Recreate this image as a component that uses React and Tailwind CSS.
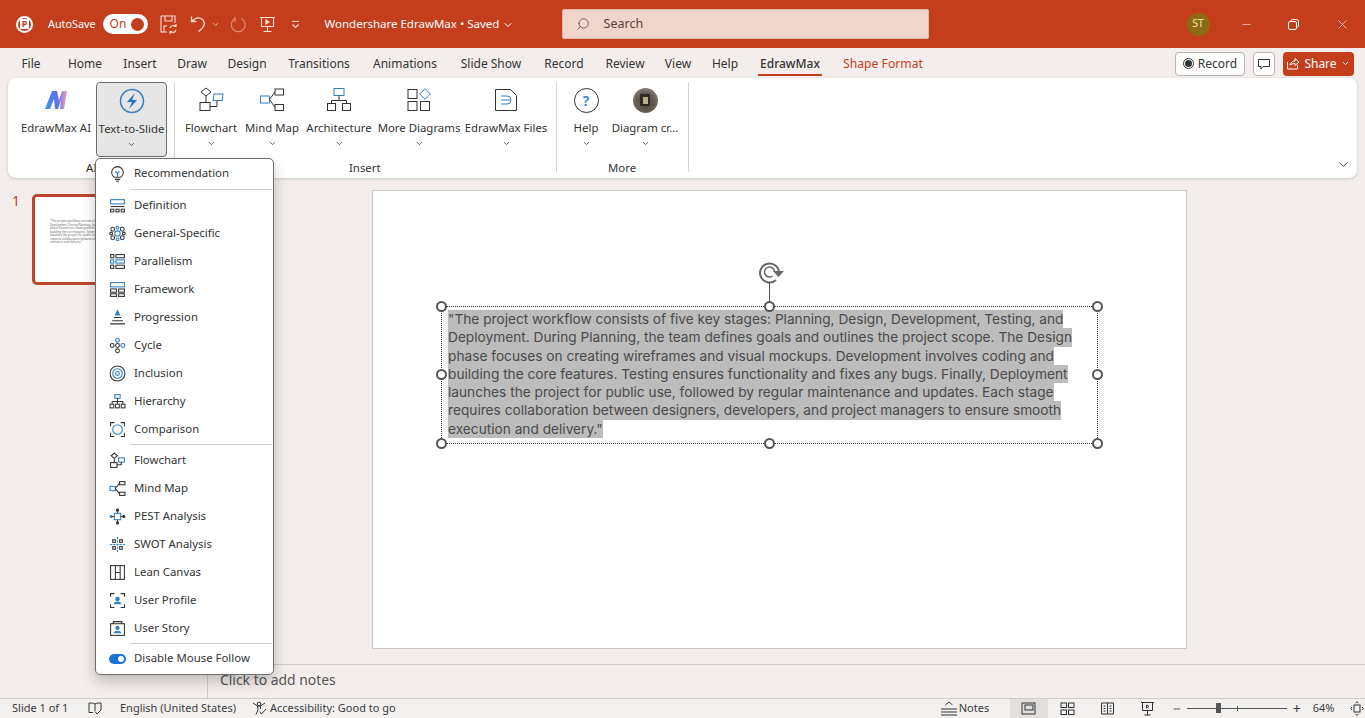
import { ChevronDown, Search, Minus, X } from "lucide-react";

const tabs = [
  ["File", "w-[46px]"], ["Home", "w-[62px]"], ["Insert", "w-[48px]"], ["Draw", "w-[56px]"], ["Design", "w-[54px]"],
  ["Transitions", "w-[90px]"], ["Animations", "w-[82px]"], ["Slide Show", "w-[90px]"], ["Record", "w-[56px]"],
  ["Review", "w-[66px]"], ["View", "w-[40px]"], ["Help", "w-[54px]"],
];

const slideLines = [
  "\"The project workflow consists of five key stages: Planning, Design, Development, Testing, and",
  "Deployment. During Planning, the team defines goals and outlines the project scope. The Design",
  "phase focuses on creating wireframes and visual mockups. Development involves coding and",
  "building the core features. Testing ensures functionality and fixes any bugs. Finally, Deployment",
  "launches the project for public use, followed by regular maintenance and updates. Each stage",
  "requires collaboration between designers, developers, and project managers to ensure smooth",
  "execution and delivery.\"",
];

const B = "#2f7fc1";
const K = "#333";

function Ico({ children, size = 18, box = 18, className = "" }) {
  return (
    <svg width={size} height={size} viewBox={`0 0 ${box} ${box}`} fill="none" stroke={K} strokeWidth="1" className={className}>
      {children}
    </svg>
  );
}

const menuIcons = {
  Recommendation: <><path d="M5 11.500C3.500 10.500 2.500 9 2.500 7a5.500 5.500 0 0 1 11 0c0 2-1 3.500-2.500 4.500z" /><path d="M5.500 13.500h5M6.500 15.300h3" /><path d="M6 6l2 2 2-2M8 8v3" stroke={B} /></>,
  Definition: <><rect x="1.500" y="2.500" width="13" height="4" stroke={B} /><path d="M1.500 9h13" /><rect x="1.500" y="11.500" width="3" height="2.500" /><rect x="6.500" y="11.500" width="3" height="2.500" /><rect x="11.500" y="11.500" width="3" height="2.500" /></>,
  "General-Specific": <><circle cx="8" cy="8" r="2.500" stroke={B} /><circle cx="3.500" cy="4" r="1.800" /><circle cx="12.500" cy="4" r="1.800" /><circle cx="3.500" cy="12" r="1.800" /><circle cx="12.500" cy="12" r="1.800" /><circle cx="8" cy="2.500" r="1.300" stroke={B} /><circle cx="8" cy="13.500" r="1.300" stroke={B} /><circle cx="2" cy="8" r="1.300" /><circle cx="14" cy="8" r="1.300" /></>,
  Parallelism: <><rect x="1.500" y="1.500" width="3" height="3" /><rect x="6.500" y="1.500" width="8" height="3" /><rect x="1.500" y="6.500" width="3" height="3" stroke={B} /><rect x="6.500" y="6.500" width="8" height="3" stroke={B} /><rect x="1.500" y="11.500" width="3" height="3" /><rect x="6.500" y="11.500" width="8" height="3" /></>,
  Framework: <><rect x="1.500" y="1.500" width="13" height="4" stroke={B} /><rect x="1.500" y="7.500" width="5.500" height="3" /><rect x="9" y="7.500" width="5.500" height="3" /><rect x="1.500" y="12" width="5.500" height="2.500" /><rect x="9" y="12" width="5.500" height="2.500" /></>,
  Progression: <><path d="M8 1.500l2 4H6z" fill={B} stroke={B} /><path d="M4.500 8h7M3 11h10M1 14h14" /></>,
  Cycle: <><circle cx="8" cy="3" r="1.800" stroke={B} /><circle cx="8" cy="13" r="1.800" /><circle cx="3" cy="8" r="1.800" /><circle cx="13" cy="8" r="1.800" stroke={B} /><circle cx="8" cy="8" r="1.800" /></>,
  Inclusion: <><circle cx="8" cy="8" r="7" /><circle cx="8" cy="8" r="4.500" stroke={B} /><circle cx="8" cy="8" r="1.800" stroke={B} /></>,
  Hierarchy: <><rect x="5.500" y="1.500" width="5" height="3.500" stroke={B} /><path d="M8 5v3M3 10V8h10v2M8 8v2" /><rect x="1" y="10.500" width="3.500" height="3.500" /><rect x="6.200" y="10.500" width="3.500" height="3.500" /><rect x="11.500" y="10.500" width="3.500" height="3.500" /></>,
  Comparison: <><path d="M1.500 5V1.500H5M11 1.500h3.500V5M14.500 11v3.500H11M5 14.500H1.500V11" /><circle cx="8" cy="8" r="4.500" stroke={B} /></>,
  Flowchart: <><path d="M5 1l3 2.500L5 6 2 3.500z" /><rect x="1.500" y="10" width="6" height="4.500" /><rect x="9" y="5.500" width="5.500" height="4" stroke={B} /><path d="M5 6v4M7.500 12h4V9.500" /></>,
  "Mind Map": <><rect x="1" y="6" width="5" height="4" stroke={B} /><rect x="10" y="1.500" width="5" height="3" /><rect x="10" y="11.500" width="5" height="3" /><path d="M6 8l4-5M6 8l4 5" /></>,
  "PEST Analysis": <><rect x="5" y="5" width="6" height="6" stroke={B} /><circle cx="8" cy="2" r="1" fill={K} /><circle cx="8" cy="14" r="1" fill={K} /><circle cx="2" cy="8" r="1" fill={B} stroke={B} /><circle cx="14" cy="8" r="1" fill={K} /><path d="M8 3v2M8 11v2M3 8h2M11 8h2" /></>,
  "SWOT Analysis": <><path d="M8 1v14M1 8h14" stroke={B} strokeDasharray="2 1" /><rect x="3.500" y="3.500" width="2.500" height="2.500" /><rect x="10" y="3.500" width="2.500" height="2.500" /><rect x="3.500" y="10" width="2.500" height="2.500" /><rect x="10" y="10" width="2.500" height="2.500" /></>,
  "Lean Canvas": <><rect x="1.500" y="1.500" width="13" height="13" /><path d="M6 1.500v13M10.500 1.500v13M6 8h4.500" stroke={K} /></>,
  "User Profile": <><path d="M1.500 4.500v-3H5M11 1.500h3.500v3M14.500 11.500v3H11M5 14.500H1.500v-3" /><circle cx="8" cy="6.500" r="1.600" fill={B} stroke={B} /><path d="M5 11c.5-2 5.500-2 6 0z" fill={B} stroke={B} /></>,
  "User Story": <><rect x="1.500" y="3.500" width="13" height="11" /><path d="M4 3.500V1.500h8v2" /><circle cx="8" cy="7.500" r="1.500" fill={B} stroke={B} /><path d="M5 12c.5-2 5.500-2 6 0z" fill={B} stroke={B} /></>,
};

function MenuItem({ label }) {
  return (
    <div className="flex h-[28px] items-center">
      <span className="flex w-[38px] justify-center pl-[4px]">
        <Ico size={17} box={16}>{menuIcons[label]}</Ico>
      </span>
      <span className="pb-[1px]">{label}</span>
    </div>
  );
}

function RibbonBtn({ label, width, children, active }) {
  return (
    <div className={`flex h-[75px] shrink-0 flex-col items-center rounded-[4px] pt-[3px] ${width} ${active ? "border border-[#6e6e6e] bg-[#e6e6e6]" : ""}`}>
      <div className="flex h-[30px] items-center justify-center">{children}</div>
      <div className="mt-[5px] whitespace-nowrap leading-[16px]">{label}</div>
      {label !== "EdrawMax AI" && <ChevronDown size={9} strokeWidth={2} className="mt-[3px]" />}
    </div>
  );
}

function Handle({ pos }) {
  return <span className={`absolute h-[11px] w-[11px] rounded-full border-2 border-[#555] bg-white ${pos}`} />;
}

export default function App() {
  return (
    <div className="relative flex h-[718px] w-[1365px] flex-col overflow-hidden bg-[#f3eeec] font-['Noto_Sans','Open_Sans',sans-serif] text-[11.4px] text-[#333]">
      {/* title bar */}
      <div className="flex h-[48px] shrink-0 items-center bg-[#c43e1c] text-white">
        <div className="ml-[16px] flex h-[17px] w-[17px] items-center justify-center rounded-full border-[2px] border-white">
          <span className="rounded-[1px] bg-white px-[1.5px] text-[9px] font-bold leading-[10px] text-[#c43e1c]">P</span>
        </div>
        <span className="ml-[15px] text-[10.8px]">AutoSave</span>
        <div className="ml-[7px] flex h-[20px] w-[45px] items-center justify-between rounded-full bg-white pl-[7px] pr-[4px]">
          <span className="text-[12px] leading-none text-[#c43e1c]">On</span>
          <span className="h-[13px] w-[13px] rounded-full bg-[#c43e1c]" />
        </div>
        <svg width="18" height="20" viewBox="0 0 18 20" fill="none" stroke="#f6ddd5" strokeWidth="1.100" className="ml-[12px]">
          <path d="M1 2h14v7M1 2v16h6M5 2v5h7V2M4 18v-6h3" />
          <path d="M10 14a3.500 3.500 0 0 1 6-1.500M16 16a3.500 3.500 0 0 1-6 1.500M16 10v2.500h-2.500M10 20v-2.500h2.500" />
        </svg>
        <svg width="17" height="18" viewBox="0 0 17 18" fill="none" stroke="#f6ddd5" strokeWidth="1.300" className="ml-[12px]">
          <path d="M1.500 1.500v5h5M1.500 6.500C5 3 9 1.500 12.500 4.500c3.500 3.500 2 7.500-4 12" />
        </svg>
        <ChevronDown size={9} strokeWidth={2} className="ml-[4px] text-[#f6ddd5]" />
        <svg width="17" height="17" viewBox="0 0 17 17" fill="none" stroke="#de8a70" strokeWidth="1.200" className="ml-[10px]">
          <path d="M11.500 2.500A7 7 0 1 1 5 2.500M5 1v5" />
        </svg>
        <svg width="17" height="17" viewBox="0 0 17 17" fill="none" stroke="#f6ddd5" strokeWidth="1.100" className="ml-[12px]">
          <path d="M1 1.500h15M2.500 1.500v9h12v-9M8.500 10.500v5M4.500 15.500h8" />
          <path d="M7 4l3 2-3 2z" fill="#f6ddd5" />
        </svg>
        <svg width="9" height="9" viewBox="0 0 9 9" fill="none" stroke="#f6ddd5" strokeWidth="1.100" className="ml-[15px]">
          <path d="M1 1.500h7M1.500 4.500L4.500 7.500l3-3" />
        </svg>
        <span className="ml-[25px] w-[237px] whitespace-nowrap text-[11.5px]">
          Wondershare EdrawMax • Saved <ChevronDown size={12} className="inline" />
        </span>
        <div className="flex h-[30px] w-[367px] items-center rounded-[2px] border border-[#e7b7a8] bg-[#f0d5cc] pl-[13px] text-[#5c4037]">
          <Search size={14} strokeWidth={1.300} className="-scale-x-100" />
          <span className="ml-[14px] text-[12.5px]">Search</span>
        </div>
        <div className="ml-[258px] flex h-[23px] w-[23px] items-center justify-center rounded-full bg-[#8f6a12] text-[10.5px] text-[#f3e6b8]">ST</div>
        <Minus size={13} strokeWidth={1} className="ml-[30px]" />
        <svg width="11" height="11" viewBox="0 0 11 11" fill="none" stroke="white" strokeWidth="1" className="ml-[35px]">
          <path d="M3 2.500V2a1.500 1.500 0 0 1 1.500-1.500h4A2 2 0 0 1 10.500 2.500v4A1.500 1.500 0 0 1 9 8h-.5" />
          <rect x="0.500" y="2.500" width="8" height="8" rx="1.500" />
        </svg>
        <X size={15} strokeWidth={1} className="ml-[36px]" />
      </div>

      {/* tabs */}
      <div className="flex h-[30px] shrink-0 items-center bg-[#f3eeec] pl-[8px] pt-[1px] text-[12px] leading-[16px]">
        {tabs.map(([t, w]) => (
          <span key={t} className={`text-center ${w}`}>{t}</span>
        ))}
        <span className="relative ml-[6px] w-[64px] text-center font-medium">
          EdrawMax
          <span className="absolute -bottom-[4px] left-0 h-[2px] w-full bg-[#c43e1c]" />
        </span>
        <span className="ml-[21px] text-[12.2px] leading-[16px] text-[#c43e1c]">Shape Format</span>
        <div className="ml-auto mr-[11px] flex items-center">
          <div className="flex h-[24px] w-[70px] items-center justify-center rounded-[4px] border border-[#b5b5b5] bg-white">
            <span className="mr-[4px] flex h-[11px] w-[11px] items-center justify-center rounded-full border border-[#333]">
              <span className="h-[7px] w-[7px] rounded-full bg-[#333]" />
            </span>
            Record
          </div>
          <div className="ml-[8px] flex h-[24px] w-[22px] items-center justify-center rounded-[4px] border border-[#b5b5b5] bg-white">
            <svg width="12" height="12" viewBox="0 0 12 12" fill="none" stroke="#333" strokeWidth="1">
              <path d="M.5 1.500h11v7H5L3 11V8.500H.5z" />
            </svg>
          </div>
          <div className="ml-[8px] flex h-[24px] w-[71px] items-center justify-center gap-[4px] rounded-[4px] bg-[#c43e1c] text-white">
            <svg width="13" height="13" viewBox="0 0 13 13" fill="none" stroke="white" strokeWidth="1">
              <path d="M.5 5v7h10V8M3 8c1-3 3-4 5-4V1.500L12 5 8 8.500V6.500C6 6.500 4.500 7 3 8z" />
            </svg>
            Share
            <ChevronDown size={9} strokeWidth={2.500} />
          </div>
        </div>
      </div>

      {/* ribbon */}
      <div className="relative mx-[8px] flex h-[100px] shrink-0 rounded-[8px] bg-white pl-[12px] pt-[4px] shadow-[0_1px_3px_rgba(0,0,0,0.18)]">
        <RibbonBtn label="EdrawMax AI" width="w-[72px]">
          <svg width="22" height="22" viewBox="0 0 22 22">
            <defs>
              <linearGradient id="ai" x1="0" y1="0" x2="1" y2="0">
                <stop offset="0" stopColor="#3a9be8" />
                <stop offset="0.55" stopColor="#5f6fe8" />
                <stop offset="1" stopColor="#f0a0c8" />
              </linearGradient>
            </defs>
            <path d="M0 20L7 2h5l2 9 3-9h5l-3 18h-4l1-9-3 9h-3L9 10l-4 10z" fill="url(#ai)" />
          </svg>
        </RibbonBtn>
        <RibbonBtn label="Text-to-Slide" width="ml-[4px] w-[71px]" active>
          <svg width="26" height="26" viewBox="0 0 26 26">
            <circle cx="13" cy="13" r="11.500" fill="none" stroke="#3a7fc0" strokeWidth="1.500" />
            <path d="M16 5l-8 9h5l-3 7 8-9h-5z" fill="#1f74c4" />
          </svg>
        </RibbonBtn>
        <span className="ml-[7px] mr-[6px] h-[90px] w-px bg-[#d6d6d6]" />
        <RibbonBtn label="Flowchart" width="w-[60px]">
          <Ico size={26} box={26}>
            <path d="M8 1l5 4-5 4-5-4z" /><rect x="2" y="15.500" width="10" height="8" /><rect x="15" y="7" width="9" height="6.500" stroke={B} transform="skewX(-8) translate(2 0)" /><path d="M8 9v6.500M12 19.500h7v-6" />
          </Ico>
        </RibbonBtn>
        <RibbonBtn label="Mind Map" width="w-[62px]">
          <Ico size={26} box={26}>
            <rect x="1.500" y="9" width="9" height="7" stroke={B} /><rect x="16" y="2" width="8.500" height="6" /><rect x="16" y="17.500" width="8.500" height="6" /><path d="M10.500 12.500L16 5M10.500 12.500L16 20.500" />
          </Ico>
        </RibbonBtn>
        <RibbonBtn label="Architecture" width="w-[72px]">
          <Ico size={26} box={26}>
            <rect x="8" y="1.500" width="10" height="7" stroke={B} /><path d="M13 8.500v5M5.500 16.500v-3h15v3" /><rect x="1.500" y="16.500" width="8" height="7" /><rect x="16.500" y="16.500" width="8" height="7" />
          </Ico>
        </RibbonBtn>
        <RibbonBtn label="More Diagrams" width="w-[88px]">
          <Ico size={24} box={24}>
            <rect x="1" y="1.500" width="9" height="9" /><path d="M18 .7l5.300 5.300-5.300 5.300L12.700 6z" stroke={B} /><rect x="1" y="13.500" width="9" height="9" /><rect x="13.500" y="13.500" width="9" height="9" />
          </Ico>
        </RibbonBtn>
        <RibbonBtn label="EdrawMax Files" width="w-[86px]">
          <Ico size={24} box={24}>
            <path d="M1.500 1.500h15l6 6v15h-21z" /><path d="M7 8h6a4 4 0 0 1 0 8H7M7 12h9" stroke={B} />
          </Ico>
        </RibbonBtn>
        <span className="ml-[7px] mr-[9px] h-[90px] w-px bg-[#d6d6d6]" />
        <RibbonBtn label="Help" width="w-[40px]">
          <div className="flex h-[25px] w-[25px] items-center justify-center rounded-full border border-[#333] text-[14px] font-semibold text-[#2f7fc1]">?</div>
        </RibbonBtn>
        <RibbonBtn label="Diagram cr..." width="ml-[3px] w-[72px]">
          <div className="flex h-[25px] w-[25px] items-center justify-center rounded-full bg-[radial-gradient(circle_at_50%_60%,#4a4238_0%,#6b6357_55%,#a8a497_100%)]">
            <div className="flex h-[12px] w-[10px] items-center justify-center rounded-[1px] bg-[#2f2a22]">
              <div className="h-[7px] w-[5px] bg-[#b9ad92]" />
            </div>
          </div>
        </RibbonBtn>
        <span className="ml-[7px] h-[90px] w-px bg-[#d6d6d6]" />
        <ChevronDown size={15} strokeWidth={1.500} className="absolute bottom-[6px] right-[6px]" />
        <span className="absolute bottom-[2px] left-[78px] leading-[16px]">AI</span>
        <span className="absolute bottom-[2px] left-[341px] leading-[16px]">Insert</span>
        <span className="absolute bottom-[2px] left-[600px] leading-[16px]">More</span>
      </div>

      {/* work area */}
      <div className="flex min-h-0 flex-1">
        <div className="relative w-[208px] shrink-0">
          <span className="absolute left-[12px] top-[14px] text-[14px] leading-[18px] text-[#c43e1c]">1</span>
          <div className="ml-[32px] mt-[16px] h-[91px] w-[160px] rounded-[5px] border-[3px] border-[#b8472c] bg-white pl-[15px] pt-[23px] text-[2.900px] leading-[3.550px] text-[#666]">
            {slideLines.map((l) => (
              <div key={l} className="whitespace-nowrap">{l.slice(0, 36)}</div>
            ))}
          </div>
        </div>
        <div className="min-w-0 flex-1 pl-[164px] pt-[12px]">
          <div className="relative h-[459px] w-[815px] border border-[#c9c9c9] bg-white">
            {/* rotate handle */}
            <svg width="27" height="23" viewBox="0 0 27 23" fill="none" stroke="#666" strokeWidth="2" className="absolute left-[385px] top-[70px]">
              <path d="M21 11a9.500 9.500 0 1 0-3 8" />
              <path d="M16.500 11a5 5 0 1 0-2 4" strokeWidth="1.500" />
              <path d="M15 10h11l-5.500 6z" fill="#666" stroke="none" />
            </svg>
            <span className="absolute left-[396px] top-[91px] h-[24px] w-px bg-[#555]" />
            <div className="absolute left-[68px] top-[115px] h-[138px] w-[657px] border border-dotted border-[#333]">
              <Handle pos="-left-[6px] -top-[6px]" />
              <Handle pos="left-[322px] -top-[6px]" />
              <Handle pos="-right-[6px] -top-[6px]" />
              <Handle pos="-left-[6px] top-[62px]" />
              <Handle pos="-right-[6px] top-[62px]" />
              <Handle pos="-left-[6px] -bottom-[6px]" />
              <Handle pos="left-[322px] -bottom-[6px]" />
              <Handle pos="-right-[6px] -bottom-[6px]" />
              <div className="pl-[6px] pt-[2px] font-['Inter',sans-serif] text-[13.700px] text-[#4a4a4a]">
                {slideLines.map((l) => (
                  <div key={l} className="h-[18.300px] whitespace-nowrap">
                    <span className="inline-block h-[18.300px] bg-[#bcbcbc] leading-[18.300px]">{l}</span>
                  </div>
                ))}
              </div>
            </div>
          </div>
        </div>
      </div>

      {/* notes */}
      <div className="ml-[207px] h-[34px] shrink-0 border-l border-t border-[#cfcbc9] pl-[12px] text-[13.900px] leading-[30px] text-[#555]">
        Click to add notes
      </div>

      {/* status bar */}
      <div className="flex h-[20px] shrink-0 items-center border-t border-[#cfcbc9] bg-[#f3f1f0] pl-[12px] text-[11px] text-[#3a3a3a]">
        <span className="w-[76px]">Slide 1 of 1</span>
        <svg width="14" height="13" viewBox="0 0 14 13" fill="none" stroke="#333" strokeWidth="1">
          <path d="M7 2C5.500 1 3 1 1 1v9.500h4M7 2c1.500-1 4-1 6-1v7M7 2v7M7 9.500l2 2.500 4-4" />
        </svg>
        <span className="ml-[18px] w-[132px]">English (United States)</span>
        <svg width="15" height="15" viewBox="0 0 15 15" fill="none" stroke="#333" strokeWidth="1">
          <circle cx="7" cy="3" r="1.800" />
          <path d="M1 2l4.500 3h3L13 2M5.500 5l.5 4-2 4.500M8.500 5v3M8 10.500l1.500 2.500L14 8" />
        </svg>
        <span className="ml-[3px]">Accessibility: Good to go</span>
        <svg width="18" height="15" viewBox="0 0 18 15" fill="none" stroke="#333" strokeWidth="1" className="ml-[544px]">
          <path d="M5.500 4L9 1l3.500 3M1 8h16M1 11h16M1 14h16" />
        </svg>
        <span className="w-[52px] pl-[1px]">Notes</span>
        <div className="flex h-full w-[38px] items-center justify-center bg-[#e2e0df]">
          <Ico size={15} box={15}><rect x="1" y="2" width="13" height="11" /><rect x="4" y="4" width="8" height="5" /></Ico>
        </div>
        <div className="flex w-[40px] justify-center">
          <Ico size={15} box={15}><rect x="1" y="2" width="5.500" height="4.500" /><rect x="8.500" y="2" width="5.500" height="4.500" /><rect x="1" y="9" width="5.500" height="4.500" /><rect x="8.500" y="9" width="5.500" height="4.500" /></Ico>
        </div>
        <div className="flex w-[40px] justify-center">
          <Ico size={15} box={15}><path d="M1.500 2h12v11h-12zM7.500 2v11M3.500 5h2M3.500 7.500h2M3.500 10h2M9.500 5h2M9.500 7.500h2M9.500 10h2" /></Ico>
        </div>
        <div className="flex w-[40px] justify-center">
          <Ico size={15} box={15}><path d="M1 1.500h13M2.500 1.500v8h10v-8M7.500 9.500v4.500M4.500 14h6M6.500 4l2.500 1.500-2.500 1.500z" /></Ico>
        </div>
        <Minus size={10} className="ml-[4px]" />
        <div className="relative ml-[5px] h-px w-[100px] bg-[#555]">
          <span className="absolute -top-[5px] left-[29px] h-[10px] w-[5px] bg-[#555]" />
          <span className="absolute -top-[2px] left-[50px] h-[5px] w-px bg-[#555]" />
        </div>
        <span className="ml-[6px] text-[14px] leading-none">+</span>
        <span className="ml-[12px] w-[36px]">64%</span>
        <svg width="14" height="15" viewBox="0 0 14 15" fill="none" stroke="#333" strokeWidth="1" className="ml-[1px]">
          <rect x="4" y="4" width="6" height="7" /><path d="M5.500 2L7 .7 8.500 2M5.500 13L7 14.300 8.500 13M2 6L.7 7.500 2 9M12 6l1.300 1.500L12 9" />
        </svg>
      </div>

      {/* Text-to-Slide dropdown */}
      <div className="absolute left-[95px] top-[158px] w-[179px] rounded-[5px] border border-[#6e6e6e] bg-white pb-[1px] shadow-[0_6px_14px_rgba(0,0,0,0.22)]">
        <div className="flex h-[29px] items-center">
          <span className="flex w-[38px] justify-center pl-[4px]">
            <Ico size={17} box={16}>{menuIcons.Recommendation}</Ico>
          </span>
          <span className="pb-[1px]">Recommendation</span>
        </div>
        <div className="ml-[34px] mr-[1px] mt-[1px] h-px bg-[#cfcfcf]" />
        <div className="pt-[1px]">
          {["Definition", "General-Specific", "Parallelism", "Framework", "Progression", "Cycle", "Inclusion", "Hierarchy", "Comparison"].map((m) => (
            <MenuItem key={m} label={m} />
          ))}
        </div>
        <div className="ml-[34px] mr-[1px] mt-px h-px bg-[#cfcfcf]" />
        <div className="pt-px">
          {["Flowchart", "Mind Map", "PEST Analysis", "SWOT Analysis", "Lean Canvas", "User Profile", "User Story"].map((m) => (
            <MenuItem key={m} label={m} />
          ))}
        </div>
        <div className="ml-[34px] mr-[1px] mt-px h-px bg-[#cfcfcf]" />
        <div className="flex h-[29px] items-center">
          <span className="flex w-[38px] justify-center pl-[4px]">
            <span className="flex h-[10px] w-[17px] items-center justify-end rounded-full bg-[#1a73d4] pr-[2px]">
              <span className="h-[6px] w-[6px] rounded-full bg-white" />
            </span>
          </span>
          <span className="pb-[1px]">Disable Mouse Follow</span>
        </div>
      </div>
    </div>
  );
}
